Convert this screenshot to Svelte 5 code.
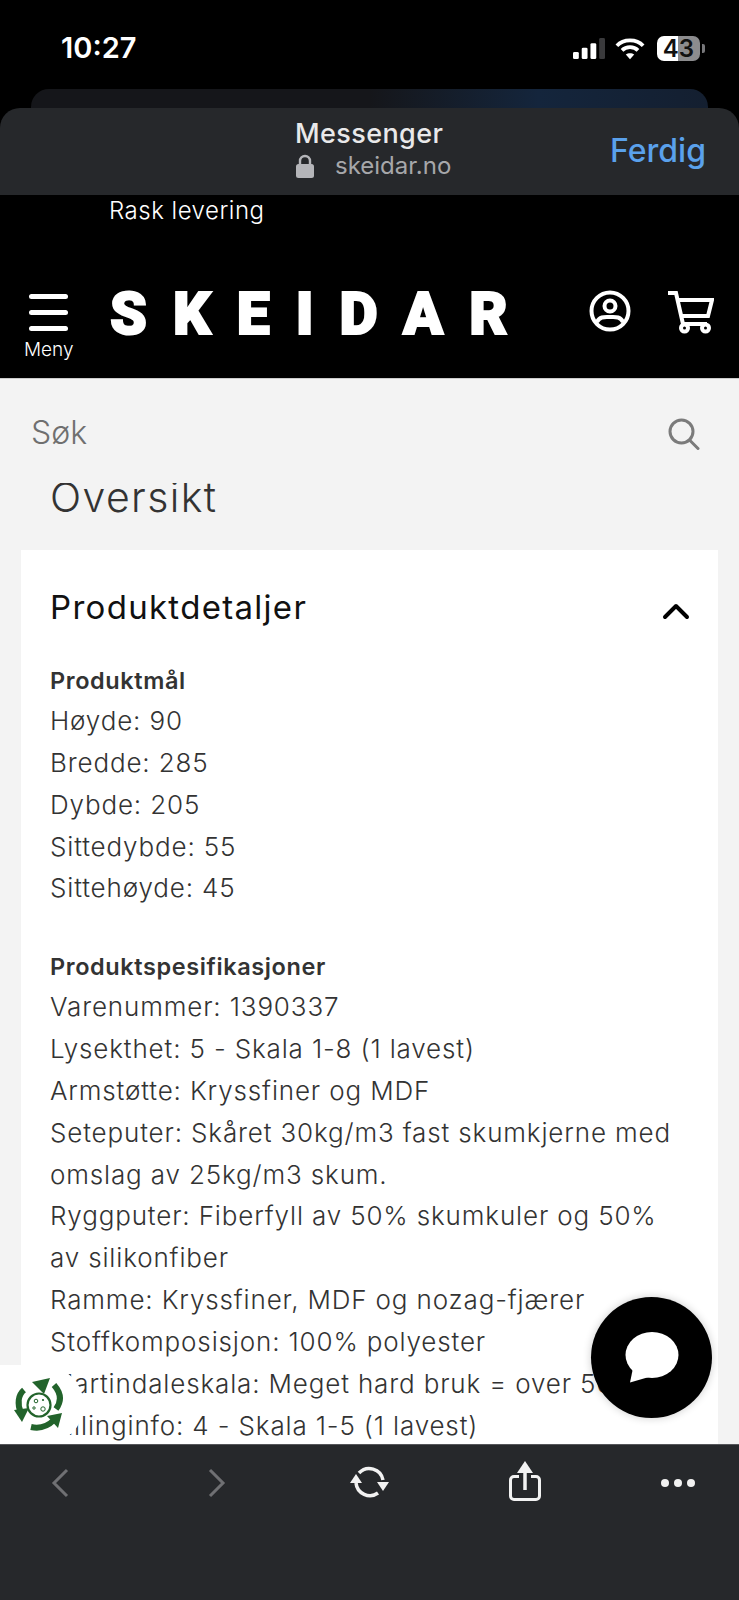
<script>
	const measures = ['Høyde: 90', 'Bredde: 285', 'Dybde: 205', 'Sittedybde: 55', 'Sittehøyde: 45'];
	const specs = [
		'Varenummer: 1390337',
		'Lysekthet: 5 - Skala 1-8 (1 lavest)',
		'Armstøtte: Kryssfiner og MDF',
		'Seteputer: Skåret 30kg/m3 fast skumkjerne med',
		'omslag av 25kg/m3 skum.',
		'Ryggputer: Fiberfyll av 50% skumkuler og 50%',
		'av silikonfiber',
		'Ramme: Kryssfiner, MDF og nozag-fjærer',
		'Stoffkomposisjon: 100% polyester',
		'Martindaleskala: Meget hard bruk = over 50.000',
		'Pillinginfo: 4 - Skala 1-5 (1 lavest)'
	];
</script>

<div class="phone">
	<div class="status_bar">
		<span class="clock">10:27</span>
		<div class="status_icons">
			<svg width="32" height="21" viewBox="0 0 33 24" preserveAspectRatio="none" fill="#fff">
				<rect x="0" y="16" width="6" height="8" rx="1.5" />
				<rect x="9" y="11" width="6" height="13" rx="1.5" />
				<rect x="18" y="6" width="6" height="18" rx="1.5" />
				<rect x="27" y="0" width="6" height="24" rx="1.5" fill="#3a3a3c" />
			</svg>
			<svg width="30" height="23" viewBox="0 0 32 24" fill="none" stroke="#fff" stroke-width="4">
				<path d="M2 9 C 9 1.500, 23 1.500, 30 9" />
				<path d="M7.500 14 C 12 9.500, 20 9.500, 24.500 14" />
				<path d="M16 23.500 L11.500 18.500 C 14 16.500, 18 16.500, 20.500 18.500 Z" fill="#fff" stroke="none" />
			</svg>
			<div class="battery"><span>43</span></div>
			<div class="battery_cap"></div>
		</div>
	</div>

	<div class="back_card"></div>

	<header class="sheet_bar">
		<div class="sheet_title">
			<div class="sheet_name">Messenger</div>
			<div class="sheet_url">
				<svg width="20" height="24" viewBox="0 0 20 24">
					<path d="M5 11 V7 a5 5 0 0 1 10 0 V11" fill="none" stroke="#b4b5b9" stroke-width="2.400" />
					<rect x="1" y="10" width="18" height="14" rx="2.500" fill="#b4b5b9" />
				</svg>
				<span>skeidar.no</span>
			</div>
		</div>
		<span class="sheet_done">Ferdig</span>
	</header>

	<div class="site_top">
		<p class="promo">Rask levering</p>
		<div class="nav_row">
			<div class="menu_btn">
				<div class="bars"><i></i><i></i><i></i></div>
				<span>Meny</span>
			</div>
			<div class="logo">SKEIDAR</div>
			<div class="nav_icons">
				<svg width="42" height="42" viewBox="0 0 42 42" fill="none" stroke="#fff" stroke-width="4">
					<circle cx="21" cy="21" r="18.500" />
					<circle cx="21" cy="16" r="5.500" />
					<path d="M8 32 C 11 26, 16 27, 21 27 C 26 27, 31 26, 34 32" />
				</svg>
				<svg width="47" height="44" viewBox="0 0 47 44" fill="none" stroke="#fff" stroke-width="4">
					<path d="M1 3 H9 L16 34 H40" />
					<path d="M11 10 H45 L41 26 H14" />
					<circle cx="17.500" cy="38" r="3.500" />
					<circle cx="38.500" cy="38" r="3.500" />
				</svg>
			</div>
		</div>
	</div>

	<div class="search_row">
		<span>Søk</span>
		<svg width="32" height="32" viewBox="0 0 32 32" fill="none" stroke="#7b7b7b" stroke-width="3">
			<circle cx="13.500" cy="13.500" r="11.500" />
			<path d="M21.500 22 L30 30.500" stroke-linecap="round" />
		</svg>
	</div>

	<main class="content">
		<h1 class="page_title">Oversikt</h1>
		<section class="details_card">
			<div class="card_head">
				<h2>Produktdetaljer</h2>
				<svg width="28" height="18" viewBox="0 0 28 18" fill="none" stroke="#000" stroke-width="4" stroke-linecap="round" stroke-linejoin="round">
					<path d="M3 15 L14 4 L25 15" />
				</svg>
			</div>
			<div class="spec_head">Produktmål</div>
			{#each measures as line}
				<div class="spec_line">{line}</div>
			{/each}
			<div class="spec_head second">Produktspesifikasjoner</div>
			{#each specs as line}
				<div class="spec_line">{line}</div>
			{/each}
		</section>

		<div class="eco_badge">
			<svg width="56" height="56" viewBox="0 0 56 56" fill="none" stroke="#22632b">
				<path d="M9 36 C 5 27, 6 18, 12 13" stroke-width="6" />
				<path d="M2 33 L17 31 L10 45 Z" fill="#22632b" stroke="none" />
				<path d="M44 33 C 50 25, 49 17, 42 9" stroke-width="6" transform="translate(0 -1)" />
				<path d="M38 1 L20 5 L32 17 Z" fill="#22632b" stroke="none" />
				<path d="M19 50 C 28 52, 36 49, 42 43" stroke-width="6" />
				<path d="M50 36 L35 39 L46 51 Z" fill="#22632b" stroke="none" />
				<circle cx="27" cy="28" r="11.500" stroke-width="2.200" />
				<circle cx="24" cy="24" r="1.800" stroke-width="1" />
				<circle cx="31" cy="32" r="2.200" stroke-width="1" />
				<circle cx="22" cy="31" r="1.200" stroke-width="1" />
				<circle cx="31" cy="23" r="1.100" fill="#22632b" stroke="none" />
			</svg>
		</div>

		<div class="chat_btn">
			<svg width="54" height="51" viewBox="0 0 54 51" fill="#fff">
				<ellipse cx="27" cy="23" rx="26.500" ry="23" />
				<path d="M8 36 L5 50.500 L24 45 Z" />
			</svg>
		</div>
	</main>

	<nav class="bottom_bar">
		<svg width="20" height="30" viewBox="0 0 20 30" fill="none" stroke="#6f7073" stroke-width="3">
			<path d="M17 2 L4 15 L17 28" />
		</svg>
		<svg class="forward_icon" width="20" height="30" viewBox="0 0 20 30" fill="none" stroke="#6f7073" stroke-width="3">
			<path d="M3 2 L16 15 L3 28" />
		</svg>
		<svg width="40" height="34" viewBox="0 0 40 34" fill="none" stroke="#f2f2f2" stroke-width="3.500">
			<path d="M9 7 A14 14 0 0 1 33 14" />
			<path d="M6 17 A14 14 0 0 0 28 27" />
			<path d="M0 17 L12 17 L6 8 Z" fill="#f2f2f2" stroke="none" />
			<path d="M27 16 L39 16 L33 25 Z" fill="#f2f2f2" stroke="none" />
		</svg>
		<svg class="share_icon" width="32" height="40" viewBox="0 0 32 40" fill="none" stroke="#f2f2f2" stroke-width="3">
			<path d="M10 15.500 H5 a3.500 3.500 0 0 0 -3.500 3.500 V35 a3.500 3.500 0 0 0 3.500 3.500 H27 a3.500 3.500 0 0 0 3.500 -3.500 V19 a3.500 3.500 0 0 0 -3.500 -3.500 H22" />
			<path d="M16 10 V29" stroke-width="3.500" />
			<path d="M8 12 L16 0 L24 12 Z" fill="#f2f2f2" stroke="none" />
		</svg>
		<div class="dots"><i></i><i></i><i></i></div>
	</nav>
</div>

<style>
	:global(body) {
		background: #000;
	}

	.phone {
		width: 739px;
		height: 1600px;
		overflow: hidden;
		display: flex;
		flex-direction: column;
		background: #000;
		font-family: Inter, sans-serif;
		color: #333;
	}

	.status_bar {
		height: 89px;
		flex: none;
		padding: 29px 34px 0 61px;
		box-sizing: border-box;
		display: flex;
		justify-content: space-between;
		align-items: flex-start;
		color: #fff;
	}

	.clock {
		font-size: 29px;
		font-weight: 600;
		line-height: 38px;
	}

	.status_icons {
		display: flex;
		align-items: center;
		gap: 10px;
		height: 38px;
	}

	.battery {
		width: 43px;
		height: 25px;
		margin-left: 2px;
		border-radius: 7px;
		background: linear-gradient(90deg, #fff 50%, #8c8c8e 50%);
		color: #111;
		font-size: 24px;
		font-weight: 600;
		line-height: 25px;
		text-align: center;
	}

	.battery_cap {
		width: 3px;
		height: 9px;
		margin-left: -8px;
		border-radius: 0 2px 2px 0;
		background: #77777a;
	}

	.back_card {
		height: 19px;
		flex: none;
		margin: 0 31px;
		border-radius: 18px 18px 0 0;
		background: linear-gradient(90deg, #15161a 0%, #15161a 50%, #14253c 75%, #141f30 100%);
	}

	.sheet_bar {
		height: 87px;
		flex: none;
		position: relative;
		display: flex;
		align-items: center;
		justify-content: flex-end;
		padding-right: 33px;
		border-radius: 20px 20px 0 0;
		background: #26282b;
	}

	.sheet_title {
		position: absolute;
		left: 295px;
		top: 8px;
	}

	.sheet_name {
		font-size: 27px;
		font-weight: 500;
		line-height: 35px;
		color: #e9e9ea;
		letter-spacing: 0.4px;
	}

	.sheet_url {
		display: flex;
		align-items: center;
		gap: 20px;
		font-size: 24px;
		line-height: 29px;
		color: #a6a7aa;
	}

	.sheet_done {
		margin-top: -2px;
		font-size: 32px;
		font-weight: 500;
		color: #5aa1ec;
	}

	.site_top {
		height: 184px;
		flex: none;
		box-sizing: border-box;
		padding-top: 1px;
		border-bottom: 1px solid #ccc;
		color: #fff;
		font-weight: 300;
	}

	.promo {
		margin: 0;
		padding-left: 109px;
		font-size: 24px;
		line-height: 30px;
		letter-spacing: 0.5px;
	}

	.nav_row {
		display: flex;
		align-items: flex-start;
		margin-top: 68px;
		padding-left: 24px;
	}

	.menu_btn {
		width: 49px;
		font-size: 19px;
		line-height: 24px;
		text-align: center;
	}

	.bars {
		display: flex;
		flex-direction: column;
		gap: 11px;
		margin: 0 5px 7px;
	}

	.bars i {
		display: block;
		height: 5px;
		border-radius: 3px;
		background: #fff;
	}

	.logo {
		margin-left: 37px;
		margin-top: -10px;
		font-family: Roboto, sans-serif;
		font-size: 59px;
		font-weight: 900;
		line-height: 60px;
		letter-spacing: 26px;
		-webkit-text-stroke: 2px #fff;
	}

	.nav_icons {
		margin-left: auto;
		padding-right: 25px;
		display: flex;
		gap: 36px;
		margin-top: -4px;
	}

	.search_row {
		height: 104px;
		flex: none;
		display: flex;
		align-items: center;
		justify-content: space-between;
		box-sizing: border-box;
		padding: 2px 39px 0 31px;
		background: #f3f3f3;
		font-size: 32px;
		font-weight: 300;
		color: #6f6f6f;
	}

	.search_row svg {
		margin-top: 3px;
	}

	.content {
		flex: 1;
		min-height: 0;
		position: relative;
		overflow: hidden;
		background: #f3f3f3;
	}

	.page_title {
		margin: -11px 0 28px 50px;
		font-size: 41px;
		font-weight: 300;
		line-height: 50px;
		color: #333;
		letter-spacing: 1.400px;
	}

	.details_card {
		margin: 0 21px;
		padding: 0 29px;
		background: #fff;
		height: 1000px;
		font-size: 26px;
		font-weight: 300;
		line-height: 41.850px;
		letter-spacing: 0.850px;
	}

	.card_head {
		height: 111px;
		display: flex;
		justify-content: space-between;
		align-items: center;
	}

	.card_head h2 {
		margin: 5px 0 0;
		font-size: 33px;
		font-weight: 400;
		color: #111;
		letter-spacing: 1.300px;
	}

	.card_head svg {
		margin-right: -1px;
		margin-top: 10px;
	}

	.spec_head {
		font-size: 23.500px;
		font-weight: 600;
		line-height: 39px;
		letter-spacing: 0.600px;
	}

	.spec_head.second {
		margin-top: 38px;
	}

	.spec_line {
		white-space: nowrap;
	}

	.eco_badge {
		position: absolute;
		left: 0;
		top: 882px;
		width: 84px;
		height: 80px;
		box-sizing: border-box;
		padding-right: 4px;
		display: flex;
		align-items: center;
		justify-content: center;
		background: #fff;
		border-radius: 0 50% 50% 0;
	}

	.chat_btn {
		position: absolute;
		left: 591px;
		top: 814px;
		width: 121px;
		height: 121px;
		border-radius: 50%;
		background: #000;
		display: flex;
		align-items: center;
		justify-content: center;
		box-shadow: 0 0 8px rgba(0, 0, 0, 0.2);
	}

	.bottom_bar {
		height: 156px;
		flex: none;
		box-sizing: border-box;
		display: grid;
		grid-template-columns: repeat(5, 155px);
		grid-auto-rows: 76px;
		justify-content: center;
		justify-items: center;
		align-items: center;
		background: #26282b;
		border-top: 1px solid #55565a;
	}

	.forward_icon {
		margin-left: 4px;
	}

	.share_icon {
		margin-top: -4px;
	}

	.dots {
		display: flex;
		gap: 5px;
		margin-right: 4px;
	}

	.dots i {
		display: block;
		width: 8px;
		height: 8px;
		border-radius: 50%;
		background: #f2f2f2;
	}
</style>
